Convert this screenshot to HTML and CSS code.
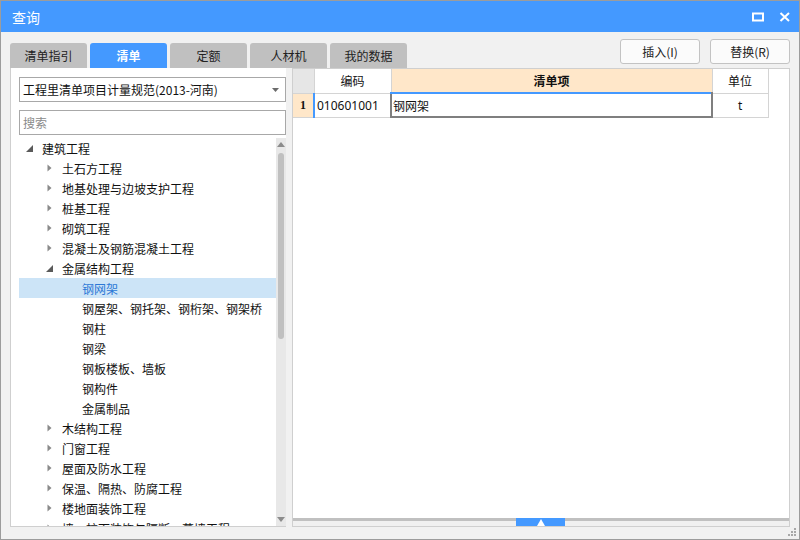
FILE: index.html
```html
<!DOCTYPE html>
<html lang="zh">
<head>
<meta charset="utf-8">
<title>查询</title>
<link rel="stylesheet" href="styles.css">
</head>
<body>
<div class="win">
  <div class="titlebar">
    <span class="title">查询</span>
    <span class="wbtns">
      <svg class="wicon" width="12" height="10" viewBox="0 0 12 10"><rect x="1" y="1.5" width="10" height="7" fill="none" stroke="#fff" stroke-width="2"/></svg>
      <svg class="wicon" width="12" height="10" viewBox="0 0 12 10"><path d="M1.5 1 L10 9 M10 1 L1.5 9" stroke="#fff" stroke-width="2"/></svg>
    </span>
  </div>
  <div class="content">
    <div class="toprow">
      <div class="tabs">
        <div class="tab">清单指引</div>
        <div class="tab active">清单</div>
        <div class="tab">定额</div>
        <div class="tab">人材机</div>
        <div class="tab">我的数据</div>
      </div>
      <div class="btns">
        <button class="btn">插入(I)</button>
        <button class="btn">替换(R)</button>
      </div>
    </div>
    <div class="main">
      <div class="left">
        <div class="select">
          <span>工程里清单项目计量规范(2013-河南)</span>
          <svg width="7" height="4" viewBox="0 0 7 4"><path d="M0 0 H7 L3.5 4 Z" fill="#6b6b6b"/></svg>
        </div>
        <div class="search">搜索</div>
        <div class="treewrap">
          <div class="tree">
            <div class="row l0"><span class="tw"><svg width="7" height="7" viewBox="0 0 7 7"><path d="M7 0 V7 H0 Z" fill="#5a5a5a"/></svg></span>建筑工程</div>
            <div class="row l1"><span class="tw"><svg width="5" height="8" viewBox="0 0 5 8"><path d="M0.5 0.5 L4.5 4 L0.5 7.5 Z" fill="#8a8a8a"/></svg></span>土石方工程</div>
            <div class="row l1"><span class="tw"><svg width="5" height="8" viewBox="0 0 5 8"><path d="M0.5 0.5 L4.5 4 L0.5 7.5 Z" fill="#8a8a8a"/></svg></span>地基处理与边坡支护工程</div>
            <div class="row l1"><span class="tw"><svg width="5" height="8" viewBox="0 0 5 8"><path d="M0.5 0.5 L4.5 4 L0.5 7.5 Z" fill="#8a8a8a"/></svg></span>桩基工程</div>
            <div class="row l1"><span class="tw"><svg width="5" height="8" viewBox="0 0 5 8"><path d="M0.5 0.5 L4.5 4 L0.5 7.5 Z" fill="#8a8a8a"/></svg></span>砌筑工程</div>
            <div class="row l1"><span class="tw"><svg width="5" height="8" viewBox="0 0 5 8"><path d="M0.5 0.5 L4.5 4 L0.5 7.5 Z" fill="#8a8a8a"/></svg></span>混凝土及钢筋混凝土工程</div>
            <div class="row l1"><span class="tw"><svg width="7" height="7" viewBox="0 0 7 7"><path d="M7 0 V7 H0 Z" fill="#5a5a5a"/></svg></span>金属结构工程</div>
            <div class="row l2 sel"><span class="tw"></span>钢网架</div>
            <div class="row l2"><span class="tw"></span>钢屋架、钢托架、钢桁架、钢架桥</div>
            <div class="row l2"><span class="tw"></span>钢柱</div>
            <div class="row l2"><span class="tw"></span>钢梁</div>
            <div class="row l2"><span class="tw"></span>钢板楼板、墙板</div>
            <div class="row l2"><span class="tw"></span>钢构件</div>
            <div class="row l2"><span class="tw"></span>金属制品</div>
            <div class="row l1"><span class="tw"><svg width="5" height="8" viewBox="0 0 5 8"><path d="M0.5 0.5 L4.5 4 L0.5 7.5 Z" fill="#8a8a8a"/></svg></span>木结构工程</div>
            <div class="row l1"><span class="tw"><svg width="5" height="8" viewBox="0 0 5 8"><path d="M0.5 0.5 L4.5 4 L0.5 7.5 Z" fill="#8a8a8a"/></svg></span>门窗工程</div>
            <div class="row l1"><span class="tw"><svg width="5" height="8" viewBox="0 0 5 8"><path d="M0.5 0.5 L4.5 4 L0.5 7.5 Z" fill="#8a8a8a"/></svg></span>屋面及防水工程</div>
            <div class="row l1"><span class="tw"><svg width="5" height="8" viewBox="0 0 5 8"><path d="M0.5 0.5 L4.5 4 L0.5 7.5 Z" fill="#8a8a8a"/></svg></span>保温、隔热、防腐工程</div>
            <div class="row l1"><span class="tw"><svg width="5" height="8" viewBox="0 0 5 8"><path d="M0.5 0.5 L4.5 4 L0.5 7.5 Z" fill="#8a8a8a"/></svg></span>楼地面装饰工程</div>
            <div class="row l1"><span class="tw"><svg width="5" height="8" viewBox="0 0 5 8"><path d="M0.5 0.5 L4.5 4 L0.5 7.5 Z" fill="#8a8a8a"/></svg></span>墙、柱面装饰与隔断、幕墙工程</div>
          </div>
          <div class="vscroll">
            <svg class="sarrow" width="8" height="5" viewBox="0 0 8 5"><path d="M0 5 L4 0 L8 5 Z" fill="#8c8c8c"/></svg>
            <div class="thumb"></div>
            <div class="sfill"></div>
            <svg class="sarrow" width="8" height="5" viewBox="0 0 8 5"><path d="M0 0 L8 0 L4 5 Z" fill="#8c8c8c"/></svg>
          </div>
        </div>
      </div>
      <div class="right">
        <div class="gridarea">
          <table class="grid">
            <colgroup><col class="c0"><col class="c1"><col class="c2"><col class="c3"></colgroup>
            <tr class="hdr">
              <td class="corner"></td>
              <td>编码</td>
              <td class="hl">清单项</td>
              <td>单位</td>
            </tr>
            <tr class="data">
              <td class="rh">1</td>
              <td class="code">010601001</td>
              <td class="cur">钢网架</td>
              <td class="unit">t</td>
            </tr>
          </table>
        </div>
        <div class="splitter"><div class="sbtn"><svg width="8" height="7" viewBox="0 0 8 7"><path d="M0 7 L4 0 L8 7 Z" fill="#fff"/></svg></div></div>
      </div>
    </div>
  </div>
  <svg class="grip" width="9" height="9" viewBox="0 0 9 9"><g fill="#a8a8a8"><rect x="6" y="0" width="2" height="2"/><rect x="3" y="3" width="2" height="2"/><rect x="6" y="3" width="2" height="2"/><rect x="0" y="6" width="2" height="2"/><rect x="3" y="6" width="2" height="2"/><rect x="6" y="6" width="2" height="2"/></g></svg>
</div>
</body>
</html>
```
FILE: styles.css
```css
html, body {
  margin: 0;
  padding: 0;
  background: #f0f0f0;
}
body {
  font-family: "Noto Sans CJK SC", "Noto Sans", sans-serif;
  font-size: 12px;
  color: #1a1a1a;
}
.win {
  position: relative;
  width: 800px;
  height: 540px;
  box-sizing: border-box;
  border: 1px solid #9c9c9c;
  background: #f1f1f1;
  display: flex;
  flex-direction: column;
}
.titlebar {
  height: 31px;
  background: #4499ff;
  color: #fff;
  display: flex;
  align-items: center;
  justify-content: space-between;
  padding: 0 8px 0 11px;
  flex: none;
}
.title {
  font-size: 14px;
}
.wbtns {
  display: flex;
  gap: 15px;
  align-items: center;
}
.wicon {
  display: block;
}
.content {
  flex: 1;
  display: flex;
  flex-direction: column;
  padding: 7px 9px 12px 9px;
  min-height: 0;
}
.toprow {
  height: 29px;
  display: flex;
  justify-content: space-between;
  flex: none;
}
.tabs {
  display: flex;
  align-self: flex-end;
  gap: 3px;
}
.tab {
  width: 77px;
  height: 25px;
  background: #c0c0c0;
  border-radius: 3px 3px 0 0;
  display: flex;
  align-items: center;
  justify-content: center;
  font-size: 12px;
  color: #222;
}
.tab.active {
  background: #4499ff;
  color: #fff;
  font-weight: bold;
}
.btns {
  display: flex;
  gap: 10px;
  align-self: flex-start;
}
.btn {
  width: 80px;
  height: 25px;
  border: 1px solid #c3c3c3;
  border-radius: 3px;
  background: #fbfbfb;
  font-family: "Noto Sans CJK SC", "Noto Sans", sans-serif;
  font-size: 12px;
  color: #222;
  padding: 0;
}
.main {
  flex: 1;
  display: flex;
  gap: 6px;
  min-height: 0;
}
.left {
  width: 276px;
  box-sizing: border-box;
  background: #fff;
  border-left: 1px solid #cfcfcf;
  border-bottom: 1px solid #cfcfcf;
  padding: 9px 0 0 8px;
  display: flex;
  flex-direction: column;
  min-height: 0;
}
.select {
  height: 25px;
  box-sizing: border-box;
  border: 1px solid #a8a8a8;
  display: flex;
  align-items: center;
  justify-content: space-between;
  padding: 0 6px 0 3px;
  font-size: 12px;
  color: #111;
}
.search {
  margin-top: 8px;
  height: 25px;
  box-sizing: border-box;
  border: 1px solid #a8a8a8;
  display: flex;
  align-items: center;
  padding-left: 3px;
  color: #8a8a8a;
}
.treewrap {
  margin-top: 3px;
  flex: 1;
  display: flex;
  min-height: 0;
  overflow: hidden;
}
.tree {
  flex: 1;
  overflow: hidden;
}
.row {
  height: 20px;
  display: flex;
  align-items: center;
  white-space: nowrap;
  font-size: 12px;
  color: #111;
}
.row.l0 { padding-left: 4px; }
.row.l1 { padding-left: 24px; }
.row.l2 { padding-left: 44px; }
.row.sel {
  background: #cce4f7;
  color: #2b78d6;
}
.tw {
  width: 12px;
  margin-right: 7px;
  display: flex;
  align-items: center;
  justify-content: center;
  flex: none;
}
.tw svg { display: block; }
.vscroll {
  width: 10px;
  background: #e8e8e8;
  display: flex;
  flex-direction: column;
  align-items: center;
  padding: 4px 0 4px;
  box-sizing: border-box;
}
.sarrow { display: block; flex: none; }
.thumb {
  margin-top: 6px;
  width: 6px;
  height: 186px;
  border-radius: 3px;
  background: #c0c0c0;
  flex: none;
}
.sfill { flex: 1; }
.right {
  flex: 1;
  box-sizing: border-box;
  border: 1px solid #cfcfcf;
  background: #fff;
  display: flex;
  flex-direction: column;
  min-height: 0;
}
.gridarea {
  flex: 1;
}
.grid {
  border-collapse: collapse;
  table-layout: fixed;
  font-size: 12px;
}
.grid col.c0 { width: 21px; }
.grid col.c1 { width: 77px; }
.grid col.c2 { width: 321px; }
.grid col.c3 { width: 56px; }
.grid td {
  border-right: 1px solid #d4d4d4;
  border-bottom: 1px solid #d4d4d4;
  height: 24px;
  padding: 0;
  box-sizing: border-box;
  text-align: center;
  color: #111;
}
.grid .hdr td { font-size: 12px; }
.grid td.corner { background: #e6e6e6; }
.grid td.hl {
  background: #ffe7c9;
  font-weight: bold;
}
.grid td.rh {
  background: #ffe7c9;
  font-family: "Liberation Serif", serif;
  font-weight: bold;
  font-size: 12px;
  border-right: 2px solid #4499ff;
}
.grid td.code {
  text-align: left;
  padding-left: 2px;
  font-family: "Noto Sans", sans-serif;
}
.grid td.cur {
  text-align: left;
  padding-left: 1px;
  border: 2px solid #7f7f7f;
  border-top-color: #4499ff;
}
.grid td.unit {
  font-family: "Noto Sans", sans-serif;
}
.splitter {
  height: 8px;
  border-top: 3px solid #c0c0c0;
  box-sizing: border-box;
  background: #f0f0f0;
  position: relative;
  flex: none;
}
.sbtn {
  position: absolute;
  left: 50%;
  top: -3px;
  margin-left: -25px;
  width: 49px;
  height: 8px;
  background: #4499ff;
  display: flex;
  align-items: center;
  justify-content: center;
}
.sbtn svg { display: block; }
.grip {
  position: absolute;
  right: 2px;
  bottom: 2px;
}
```
